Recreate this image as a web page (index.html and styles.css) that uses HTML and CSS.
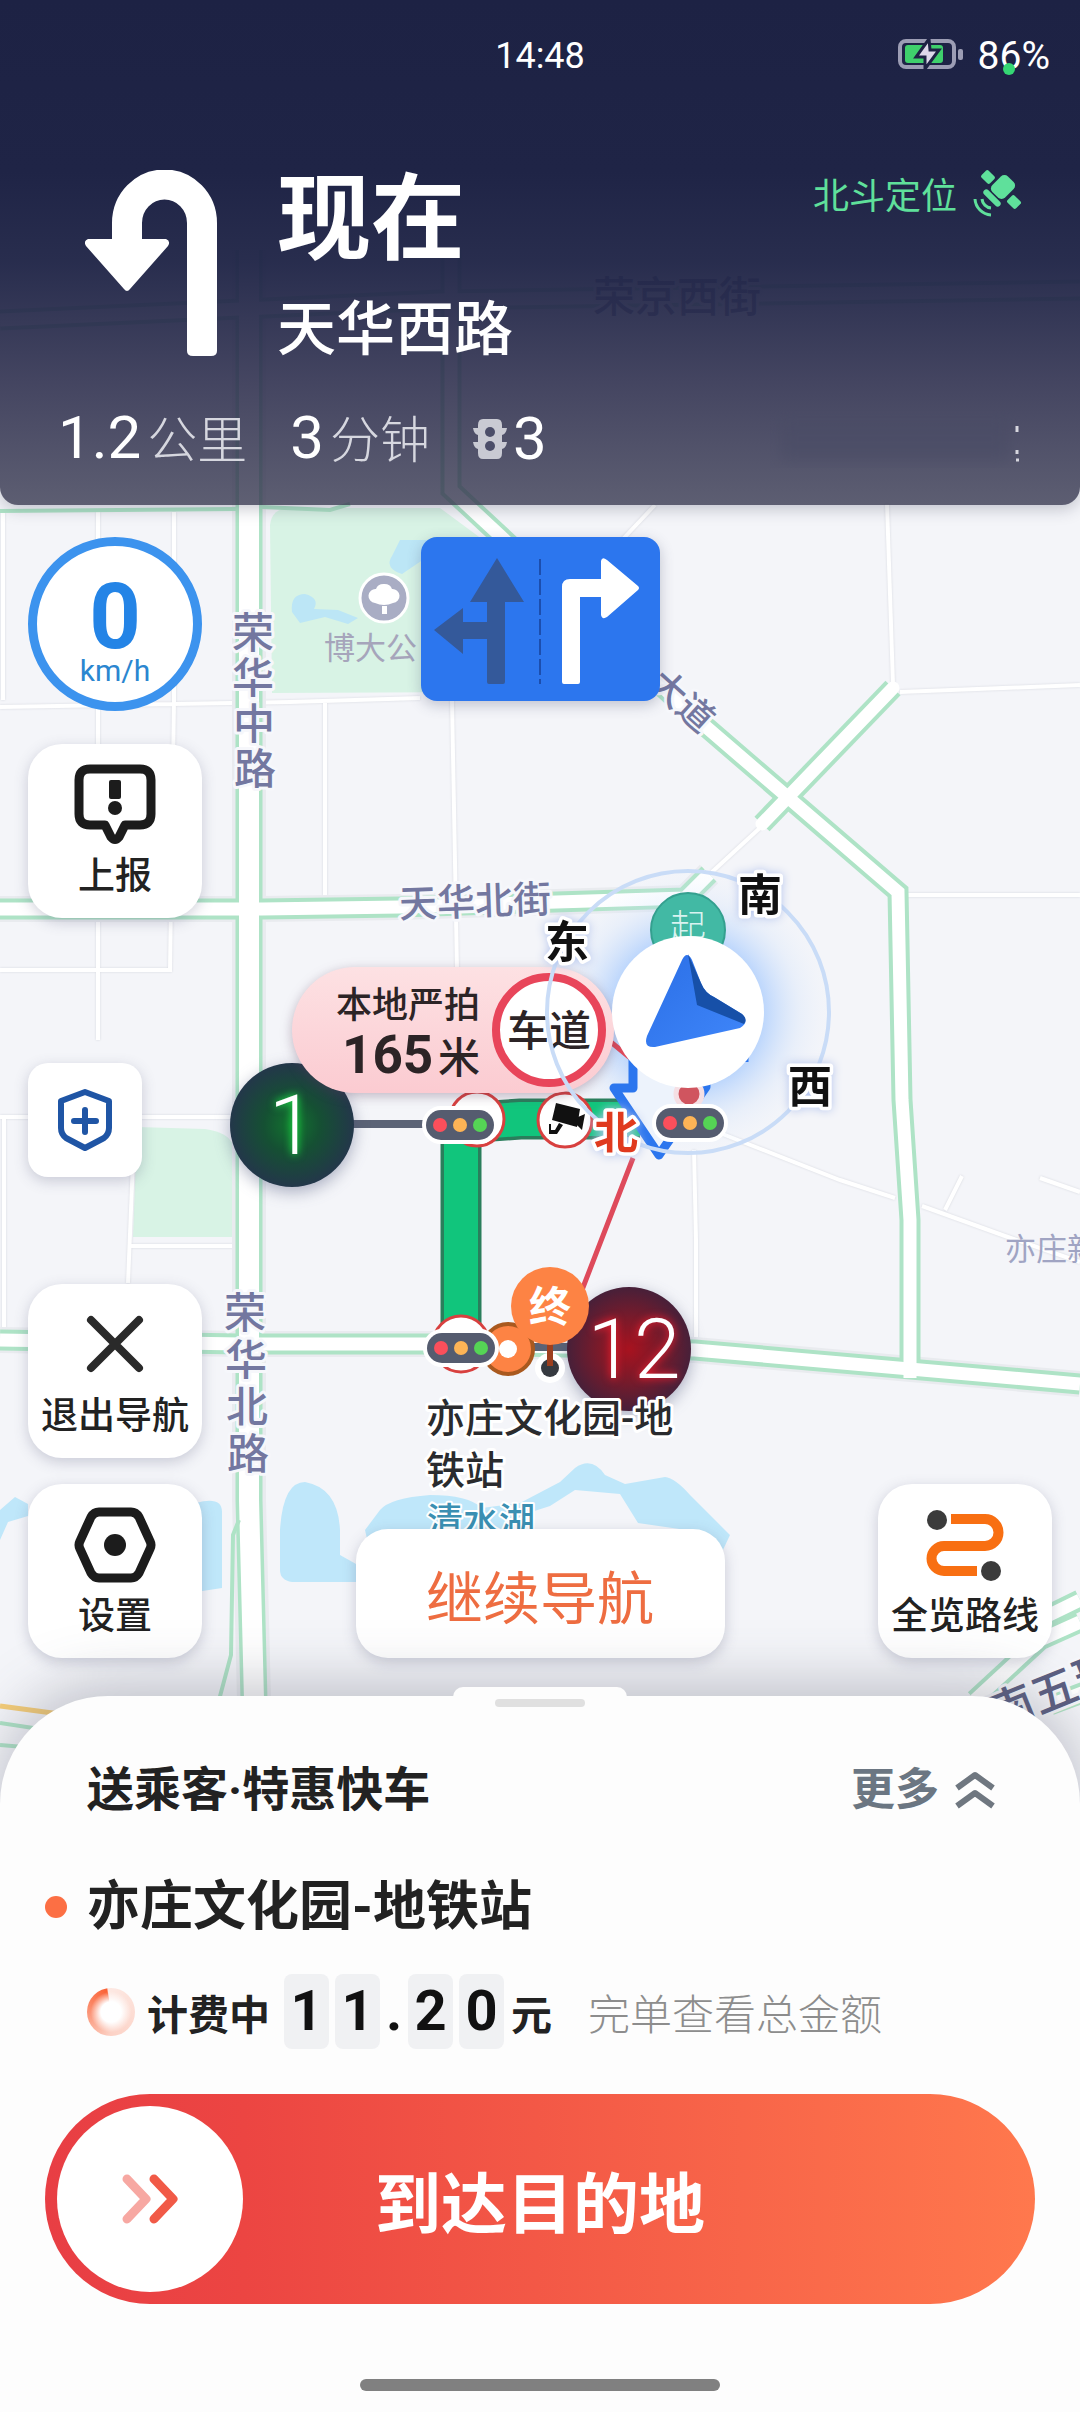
FILE: index.html
```html
<!DOCTYPE html>
<html lang="zh-CN">
<head>
    <meta charset="UTF-8">
    <meta name="viewport" content="width=device-width, initial-scale=1.0">
    <title>导航</title>
    <link rel="stylesheet" href="styles.css">
</head>
<body>
    <!-- map canvas -->
    <svg class="map" role="img" aria-label="地图">
        <defs>
            <radialGradient id="greenLed">
                <stop offset="0" stop-color="#12752f"/>
                <stop offset="0.45" stop-color="#155033"/>
                <stop offset="1" stop-color="#23374a"/>
            </radialGradient>
            <radialGradient id="redLed">
                <stop offset="0" stop-color="#a8121f"/>
                <stop offset="0.5" stop-color="#7a1a2a"/>
                <stop offset="1" stop-color="#472039"/>
            </radialGradient>
            <radialGradient id="halo">
                <stop offset="0.5" stop-color="#8dbcff" stop-opacity="0.9"/>
                <stop offset="0.8" stop-color="#c8defc" stop-opacity="0.35"/>
                <stop offset="1" stop-color="#e6f0fd" stop-opacity="0.1"/>
            </radialGradient>
            <linearGradient id="bubble" x1="0" y1="0" x2="0" y2="1">
                <stop offset="0" stop-color="#fde1e3"/>
                <stop offset="1" stop-color="#fbcbd1"/>
            </linearGradient>
            <linearGradient id="arrowFace" x1="0" y1="0" x2="1" y2="1">
                <stop offset="0" stop-color="#2b6fe6"/>
                <stop offset="1" stop-color="#3f86fa"/>
            </linearGradient>
            <g id="light">
                <rect class="light-body" x="-34" y="-15" width="68" height="30" rx="15"/>
                <circle cx="-20" r="7" fill="#fb4f5b"/>
                <circle r="7" fill="#fdb456"/>
                <circle cx="20" r="7" fill="#55d455"/>
            </g>
        </defs>

        <!-- parks and water -->
        <path class="park" d="M270 525Q272 508 290 508H440L490 545V692L272 693Z"/>
        <path class="park" d="M137 1127L205 1129Q228 1132 233 1145V1237H133Z"/>
        <g class="water-light">
            <path d="M400 540H430V555L402 574Q384 568 392 556Z"/>
            <path d="M292 612Q290 594 305 594Q320 598 314 609L338 610L358 618L348 624L325 617L300 623Z"/>
        </g>
        <g class="water">
            <path d="M0 1510L15 1497L28 1504V1516L8 1522L0 1540Z"/>
            <path d="M196 1503Q222 1496 222 1512V1588L196 1592Z"/>
            <path d="M280 1530Q283 1482 305 1482Q338 1488 340 1530V1555L356 1564V1582H292Q280 1580 280 1570Z"/>
            <path d="M365 1530L380 1510Q390 1498 430 1495Q468 1495 482 1508L520 1503L560 1482L575 1468Q592 1456 605 1475L625 1484L665 1477Q675 1478 690 1495L730 1535L722 1552H370Z"/>
        </g>
        <path class="land" d="M500 1535L522 1515L550 1506L575 1490L620 1494L638 1523L700 1532L724 1552H500Z"/>

        <!-- small streets -->
        <g class="street">
            <path d="M3 512V700M98 512V1040M174 512V700L170 970H0M0 707L290 702L420 698M325 703V896"/>
            <path d="M452 700L457 970M887 504L893 684M900 692L1080 685M905 895H1080M655 505L622 540"/>
            <path d="M0 1117H237M4 1117V1330M133 1160L128 1283M128 1246H237"/>
            <path d="M720 1133L840 1180L895 1198M922 1206L1005 1236L1080 1262M945 1210L962 1176M694 1150L696 1240V1340"/>
            <path d="M712 872L762 826M1040 1178L1080 1192"/>
        </g>

        <!-- main roads: casing, green edge, white middle -->
        <path id="r1" class="road-case" d="M249 250V1500L254 1700"/>
        <g class="road-case">
            <path d="M0 909H262L400 907L685 898L709 874"/>
            <path d="M0 1340L240 1344H430L695 1350L1080 1384"/>
        </g>
        <g class="road-edge wide">
            <path d="M249 250V1500L254 1700"/>
        </g>
        <g class="road-edge">
            <path d="M0 909H262L400 907L685 898L709 874"/>
            <path d="M0 1340L240 1344H430L695 1350L1080 1384"/>
            <path d="M451 250V490L698 720L898 892L902 1100L910 1220V1378"/>
            <path d="M893 688L762 824"/>
            <path d="M0 320L440 300L1080 290"/>
            <path d="M1080 1600L1035 1622M975 1700L1040 1640L1080 1622M1090 1690L1050 1705"/>
        </g>
        <g class="road-fill wide">
            <path d="M249 250V1500L254 1700"/>
        </g>
        <g class="road-fill">
            <path d="M0 909H262L400 907L685 898L709 874"/>
            <path d="M0 1340L240 1344H430L695 1350L1080 1384"/>
            <path d="M451 250V490L698 720L898 892L902 1100L910 1220V1378"/>
            <path d="M893 688L762 824" stroke-linecap="round"/>
            <path d="M0 320L440 300L1080 290"/>
            <path d="M1080 1600L1035 1622M975 1700L1040 1640L1080 1622M1090 1690L1050 1705"/>
        </g>
        <path class="road-line" d="M0 511L237 509M262 507L330 510L350 504M239 1520L233 1535L231 1655L219 1700M0 1723L60 1732M0 1745L60 1750"/>
        <path d="M0 1706L60 1714" stroke="#f5cd78" stroke-width="5"/>

        <!-- road and place names -->
        <g class="road-name">
            <text class="s42" text-anchor="middle"><tspan x="253" y="648">荣</tspan><tspan x="253" y="693">华</tspan><tspan x="254" y="739">中</tspan><tspan x="255" y="784">路</tspan></text>
            <text class="s42" text-anchor="middle"><tspan x="245" y="1328">荣</tspan><tspan x="246" y="1375">华</tspan><tspan x="247" y="1422">北</tspan><tspan x="248" y="1469">路</tspan></text>
            <text class="s38" transform="rotate(-2 475 903)" x="399" y="915">天华北街</text>
            <text class="s36" transform="rotate(42 683 700)" x="647" y="714">大道</text>
            <text class="s42" x="593" y="312">荣京西街</text>
            <text class="s46 dark" transform="rotate(-22 1052 1690)" x="985" y="1708">南五环</text>
        </g>
        <text class="place-name" x="1005" y="1260">亦庄新</text>
        <text class="park-name" x="324" y="659">博大公</text>
        <text class="lake-name" x="427" y="1534">清水湖</text>
        <circle cx="384" cy="598" r="24" fill="#a9adc4" stroke="#fff" stroke-width="3"/>
        <path d="M384 584a8 7 0 0 1 8 5a7 7 0 0 1 1 14q-9 4-18 0a7 7 0 0 1 1-14a8 7 0 0 1 8-5ZM382 606h5v8h-5Z" fill="#fff"/>

        <!-- start point and halo of the car -->
        <circle cx="688" cy="1012" r="140" fill="url(#halo)" class="halo"/>
        <circle cx="688" cy="930" r="37" fill="#42b9a4" stroke="#34a08f" stroke-width="2"/>
        <text class="start s36" x="688" y="941" text-anchor="middle">起</text>

        <!-- route -->
        <path class="route-edge" d="M461 1345V1140Q463 1121 492 1121L520 1119H640"/>
        <path class="route" d="M461 1345V1140Q463 1121 492 1121L520 1119H640"/>
        <path d="M606 1038L640 1066M633 1158L582 1290" stroke="#de4a5b" stroke-width="5"/>
        <path d="M633 1030V1088H614L659 1155L706 1087V1030M744 1050V1062" fill="#edf3fc" stroke="#2c76ee" stroke-width="9" stroke-linejoin="round"/>
        <path d="M345 1124H430M530 1347H580" stroke="#5b6376" stroke-width="8"/>

        <g class="camera">
            <circle cx="477" cy="1119" r="27"/>
            <circle cx="565" cy="1120" r="27"/>
            <circle cx="461" cy="1344" r="28"/>
        </g>
        <path d="M556 1103L580 1109L577 1127L552 1120ZM578 1117L585 1114L582 1130L576 1124ZM559 1123L555 1130H551V1124H549V1134H557L563 1125Z" fill="#111"/>
        <circle cx="508" cy="1349" r="25" fill="#fd8344" stroke="#a9591f" stroke-width="4"/>
        <circle cx="508" cy="1349" r="9" fill="#fff"/>

        <!-- signal countdowns -->
        <g class="signal">
            <circle cx="292" cy="1125" r="62" fill="url(#greenLed)"/>
            <circle cx="629" cy="1349" r="62" fill="url(#redLed)"/>
        </g>
        <text class="led green" x="292" y="1154" text-anchor="middle">1</text>
        <text class="led red" x="634" y="1378" text-anchor="middle">12</text>

        <circle cx="550" cy="1368" r="15" fill="#fff"/>
        <circle cx="550" cy="1368" r="9" fill="#363a40"/>
        <path d="M550 1340V1366" stroke="#9c3f1e" stroke-width="6"/>
        <circle cx="550" cy="1306" r="39" fill="#fd8344"/>
        <text class="pin s42" x="550" y="1322" text-anchor="middle">终</text>

        <text class="stop-name"><tspan x="426" y="1432">亦庄文化园-地</tspan><tspan x="426" y="1484">铁站</tspan></text>

        <!-- camera bubble -->
        <rect class="bubble" x="292" y="967" width="322" height="126" rx="63"/>
        <text class="bubble-text s36" x="336" y="1018">本地严拍</text>
        <text class="bubble-num" x="342" y="1073">165</text>
        <text class="bubble-text s42" x="438" y="1073">米</text>
        <circle cx="549" cy="1030" r="53" fill="#fff" stroke="#e8455a" stroke-width="8"/>
        <text class="bubble-text s42" x="549" y="1046" text-anchor="middle">车道</text>

        <!-- compass and car -->
        <circle cx="688" cy="1012" r="141" fill="none" stroke="#c9dcf7" stroke-width="4"/>
        <circle cx="689" cy="1094" r="13" fill="#d0555f" stroke="#f5dfe4" stroke-width="5"/>
        <circle cx="688" cy="1012" r="76" fill="#fff"/>
        <path d="M682 960Q687 950 692 960L701 983Q705 993 714 997L742 1014Q750 1022 740 1028L655 1047Q643 1048 647 1036Z" fill="url(#arrowFace)"/>
        <path d="M688 954L697 1005L744 1024Q748 1019 742 1014L714 997Q705 993 701 983Z" fill="#1750a8"/>

        <use href="#light" x="460" y="1125"/>
        <use href="#light" x="690" y="1123"/>
        <use href="#light" x="461" y="1348"/>

        <g class="compass" text-anchor="middle">
            <text x="567" y="958">东</text>
            <text x="760" y="911">南</text>
            <text x="810" y="1103">西</text>
            <text class="north" x="616" y="1149">北</text>
        </g>
    </svg>

    <header class="header">
        <div class="status">
            <time>14:48</time>
            <div class="battery">
                <svg width="66" height="32" viewBox="0 0 66 32">
                    <rect x="2" y="3" width="54" height="26" rx="6" fill="none" stroke="#9c9db4" stroke-width="4"/>
                    <rect x="7" y="7" width="38" height="18" rx="3" fill="#3fd06c"/>
                    <rect x="60" y="11" width="5" height="11" rx="2" fill="#9c9db4"/>
                    <path d="M31 1L18 19H27V31L41 12H32Z" fill="#ddd8ea" stroke="#1e2244" stroke-width="3"/>
                </svg>
                <span>86%</span>
                <i class="dot"></i>
            </div>
        </div>
        <div class="turn">
            <svg width="132" height="188" viewBox="0 0 132 188">
                <path d="M42 72V53A37 38 0 0 1 117 53V181" fill="none" stroke="#fff" stroke-width="30"/>
                <path d="M102 175H132V181Q132 186 126 186H108Q102 186 102 181Z" fill="#fff"/>
                <path d="M3 69H81Q86 71 83 76L45 119Q42 123 39 119L1 76Q-2 71 3 69Z" fill="#fff"/>
            </svg>
            <div class="turn-text">
                <h1>现在</h1>
                <p>天华西路</p>
            </div>
            <div class="gps">
                <span>北斗定位</span>
                <svg width="50" height="50" viewBox="0 0 50 50" fill="#5fe09b">
                    <rect x="-6" y="-5" width="12" height="10" rx="2" transform="translate(15 9) rotate(45)"/>
                    <rect x="-11" y="-9" width="22" height="18" rx="5" transform="translate(30 19) rotate(-45)"/>
                    <rect x="-6" y="-5" width="12" height="10" rx="2" transform="translate(41 34) rotate(45)"/>
                    <rect x="-11" y="-3" width="22" height="6" rx="3" transform="translate(19 30) rotate(45)"/>
                    <path d="M9 31A10 10 0 0 0 18 40M2 31A17 17 0 0 0 18 47" fill="none" stroke="#5fe09b" stroke-width="3"/>
                </svg>
            </div>
        </div>
        <div class="stats">
            <span class="stat"><b>1.2</b>公里</span>
            <span class="stat"><b>3</b>分钟</span>
            <span class="stat lights">
                <svg width="34" height="40" viewBox="0 0 34 40">
                    <path d="M10 0H24Q29 0 29 6V9H34Q33 15 29 16V23H34Q33 29 29 30V34Q29 40 24 40H10Q5 40 5 34V30Q1 29 0 23H5V16Q1 15 0 9H5V6Q5 0 10 0Z" fill="#c9cad3"/>
                    <circle cx="17" cy="13" r="5" fill="#4c4e69"/>
                    <circle cx="17" cy="27" r="5" fill="#4c4e69"/>
                </svg>
                <b>3</b>
            </span>
            <svg class="arrival" width="250" height="58" viewBox="0 0 250 58">
                <rect class="smudge" x="10" y="8" width="230" height="42"/>
                <path d="M247 16v6M247 40v4M246 50h3" stroke="#d6d6de" stroke-width="3"/>
            </svg>
        </div>
    </header>

    <main class="controls">
        <div class="col left">
            <div class="speed"><strong>0</strong><span>km/h</span></div>
            <button class="tile report">
                <svg width="82" height="80" viewBox="0 0 82 80" fill="none" stroke="#1c1c1c" stroke-width="9">
                    <path d="M16 5H66Q77 5 77 16V50Q77 61 66 61H51L45 73Q41 78 37 73L31 61H16Q5 61 5 50V16Q5 5 16 5Z" stroke-linejoin="round"/>
                    <rect x="35" y="16" width="12" height="19" rx="2" fill="#1c1c1c" stroke="none"/>
                    <circle cx="41" cy="44" r="7" fill="#1c1c1c" stroke="none"/>
                </svg>
                <span>上报</span>
            </button>
            <button class="shield" aria-label="安全中心">
                <svg width="56" height="64" viewBox="0 0 56 64" fill="none" stroke="#1f55a5" stroke-width="6">
                    <path d="M28 4L52 13V40Q52 46 47 50L28 60L9 50Q4 46 4 40V13Z" stroke-linejoin="round"/>
                    <path d="M28 22V44M17 33H39" stroke-linecap="round"/>
                </svg>
            </button>
            <button class="tile exit">
                <svg width="82" height="80" viewBox="0 0 82 80" fill="none" stroke="#2a2a2a" stroke-width="8" stroke-linecap="round">
                    <path d="M17 16L65 64M65 16L17 64"/>
                </svg>
                <span>退出导航</span>
            </button>
            <button class="tile">
                <svg width="82" height="80" viewBox="0 0 82 80">
                    <path d="M25 8H57Q62 8 65 13L76 37Q78 41 76 45L65 69Q62 74 57 74H25Q20 74 17 69L6 45Q4 41 6 37L17 13Q20 8 25 8Z" fill="none" stroke="#1c1c1c" stroke-width="9"/>
                    <circle cx="41" cy="41" r="11" fill="#1c1c1c"/>
                </svg>
                <span>设置</span>
            </button>
        </div>

        <div class="col center">
            <svg class="lanes" width="239" height="164" viewBox="0 0 239 164">
                <path d="M76 21L103 65H84V145Q84 147 82 147H68Q66 147 66 145V102H42V117L13 93L42 71V85H66V65H49Z" fill="#34599a"/>
                <path d="M119 22V147" stroke="#1c4eae" stroke-width="2" stroke-dasharray="16 4"/>
                <path d="M141 145V50Q141 42 149 42H180V24Q181 19 186 23L217 49Q219 51 217 53L186 80Q181 83 180 78V60H159V145Q159 147 157 147H143Q141 147 141 145Z" fill="#fff"/>
            </svg>
            <button class="resume">继续导航</button>
        </div>

        <div class="col right">
            <button class="tile">
                <svg width="82" height="80" viewBox="0 0 82 80">
                    <path d="M27 15H61A13 13 0 0 1 61 42H20A12 12 0 0 0 20 67H53" fill="none" stroke="#f86f12" stroke-width="10"/>
                    <circle cx="13" cy="16" r="10" fill="#3b3b3b"/>
                    <circle cx="67" cy="67" r="10" fill="#3b3b3b"/>
                </svg>
                <span>全览路线</span>
            </button>
        </div>
    </main>

    <section class="sheet">
        <div class="handle"></div>
        <div class="row trip">
            <h2>送乘客·特惠快车</h2>
            <button class="more">更多
                <svg width="40" height="38" viewBox="0 0 40 38" fill="none" stroke="#6f7780" stroke-width="6">
                    <path d="M2 17L20 4L38 17M2 35L20 22L38 35" stroke-linejoin="round"/>
                </svg>
            </button>
        </div>
        <div class="row dest">亦庄文化园-地铁站</div>
        <div class="row fare">
            <span class="meter"></span>
            <span class="charging">计费中</span>
            <span class="digits"><b>1</b><b>1</b><em>.</em><b>2</b><b>0</b></span>
            <span class="yuan">元</span>
            <span class="note">完单查看总金额</span>
        </div>
        <button class="slide">
            <span class="knob">
                <svg width="56" height="52" viewBox="0 0 56 52" fill="none" stroke-width="9" stroke-linecap="round" stroke-linejoin="round">
                    <path d="M5 6L24 26L5 46" stroke="#f7a8a2"/>
                    <path d="M32 6L51 26L32 46" stroke="#f15a47"/>
                </svg>
            </span>
            到达目的地
        </button>
        <div class="home-bar"></div>
    </section>
</body>
</html>
```
FILE: styles.css
```css
* {
    box-sizing: border-box;
}

body {
    position: relative;
    display: flex;
    flex-direction: column;
    min-height: 100vh;
    margin: 0;
    background-color: #f4f5f9;
    font-family: Roboto, "Noto Sans CJK SC", sans-serif;
    color: #222;
}

h1, h2, p {
    margin: 0;
}

button {
    border: none;
    padding: 0;
    font-family: inherit;
    color: inherit;
    cursor: pointer;
}

/* map */
.map {
    position: absolute;
    top: 0;
    left: 0;
    width: 100%;
    height: 100%;
    overflow: hidden;
}

.park { fill: #d8f3e5; }
.water { fill: #bfe7fa; }
.water-light { fill: #bce6f6; }
.land { fill: #f4f5f9; }

.street path {
    fill: none;
    stroke: #fff;
    stroke-width: 4;
    filter: drop-shadow(0 0 1px #d5d7de);
}

.road-case, .road-edge, .road-fill, .road-line {
    fill: none;
}

.road-case { stroke: #e9ebef; stroke-width: 26; }
#r1 { stroke-width: 34; }
.road-edge { stroke: #aee3c6; stroke-width: 21; }
.road-fill { stroke: #fff; stroke-width: 13; }
.road-edge.wide { stroke-width: 27; }
.road-fill.wide { stroke-width: 20; }
.road-line { stroke: #aee3c6; stroke-width: 4; }

.s36 { font-size: 36px; }
.s38 { font-size: 38px; }
.s42 { font-size: 42px; }
.s46 { font-size: 46px; }

.map text {
    paint-order: stroke;
    stroke-linejoin: round;
}

.road-name {
    fill: #7377a0;
    stroke: #f6f7fb;
    stroke-width: 6px;
    font-weight: 500;
}

.road-name .dark { fill: #5c5f82; }

.place-name { font-size: 31px; fill: #a0a4c3; }
.park-name { font-size: 31px; fill: #a6a5bb; }
.lake-name { font-size: 36px; font-weight: 500; fill: #3a8fb2; stroke: #fff; stroke-width: 4px; }

.route-edge { fill: none; stroke: #2a7e5c; stroke-width: 41; }
.route { fill: none; stroke: #11c57c; stroke-width: 34; }

.camera circle { fill: #fff; stroke: #d8403f; stroke-width: 3; }
.light-body { fill: #555c6f; stroke: #fff; stroke-width: 8; paint-order: stroke; }
.signal { filter: drop-shadow(0 5px 8px rgba(60, 70, 110, 0.4)); }

.led {
    font-size: 84px;
    font-weight: 300;
    fill: #fff;
}

.led.green { filter: drop-shadow(0 0 4px #1eff4c); }
.led.red { filter: drop-shadow(0 0 4px #ff2030); }

.pin { fill: #fff; font-weight: 700; }
.start { fill: #d9f3f0; font-weight: 300; }

.stop-name {
    font-size: 39px;
    font-weight: 500;
    fill: #2a2b2e;
    stroke: #fff;
    stroke-width: 6px;
}

.bubble {
    fill: url(#bubble);
    filter: drop-shadow(0 3px 6px rgba(90, 60, 90, 0.35));
}

.bubble-text { fill: #2c2426; font-weight: 500; }
.bubble-num { font-size: 53px; font-weight: 700; fill: #2c2426; }
.halo { opacity: 0.7; }

.compass text {
    font-size: 44px;
    font-weight: 700;
    fill: #111;
    stroke: #fff;
    stroke-width: 7px;
    filter: drop-shadow(0 0 5px #b4c4ec);
}

.compass .north { fill: #e03a1e; }

/* header */
.header {
    position: relative;
    padding-bottom: 35px;
    border-radius: 0 0 18px 18px;
    background: linear-gradient(#1d2244 0%, #1f2446 34%, rgba(32, 37, 71, 0.96) 52%, rgba(44, 45, 76, 0.88) 76%, rgba(55, 56, 80, 0.8) 100%);
    box-shadow: 0 4px 16px rgba(40, 42, 70, 0.25);
    color: #fff;
}

.status {
    display: grid;
    grid-template-columns: 1fr auto 1fr;
    align-items: center;
    height: 112px;
    padding: 0 30px;
    font-size: 36px;
}

.status time {
    grid-column: 2;
}

.battery {
    position: relative;
    justify-self: end;
    display: flex;
    align-items: center;
    gap: 14px;
    font-size: 39px;
}

.battery svg {
    margin-bottom: 4px;
}

.dot {
    position: absolute;
    right: 35px;
    bottom: 4px;
    width: 12px;
    height: 12px;
    border-radius: 50%;
    background-color: #35d774;
}

.turn {
    display: flex;
    align-items: flex-start;
    padding: 58px 57px 0 85px;
}

.turn-text {
    flex: 1;
    margin-left: 60px;
}

.turn-text h1 {
    font-size: 94px;
    line-height: 100px;
}

.turn-text p {
    margin-top: 24px;
    font-size: 59px;
    font-weight: 500;
    line-height: 72px;
}

.gps {
    display: flex;
    align-items: center;
    gap: 16px;
    height: 46px;
    font-size: 36px;
    color: #5fe09b;
}

.stats {
    display: flex;
    align-items: center;
    gap: 43px;
    height: 62px;
    margin-top: 42px;
    padding: 0 60px 0 58px;
}

.stat {
    display: flex;
    align-items: baseline;
    gap: 6px;
    font-size: 50px;
    font-weight: 300;
    line-height: 62px;
    color: #d6d7df;
}

.stat b {
    font-size: 60px;
    font-weight: 400;
    color: #fff;
}

.arrival {
    margin-left: auto;
}

.smudge {
    fill: #4a4c66;
    filter: blur(8px);
    opacity: 0.6;
}

/* floating controls */
.controls {
    position: relative;
    flex: 1;
    display: grid;
    grid-template-columns: 1fr auto 1fr;
    padding: 32px 28px 38px;
}

.col {
    display: flex;
    flex-direction: column;
}

.left {
    align-items: flex-start;
}

.center {
    align-items: center;
    justify-content: space-between;
}

.right {
    align-items: flex-end;
    justify-content: flex-end;
}

.speed {
    display: flex;
    flex-direction: column;
    align-items: center;
    width: 174px;
    height: 174px;
    padding-top: 30px;
    border: 9px solid #3c93ee;
    border-radius: 50%;
    background-color: #fff;
    color: #2484e6;
}

.speed strong {
    font-size: 90px;
    line-height: 84px;
}

.speed span {
    font-size: 30px;
    line-height: 22px;
    color: #2b86d0;
}

.tile, .shield, .resume {
    background-color: #fff;
    box-shadow: 0 4px 14px rgba(70, 75, 110, 0.25);
}

.tile {
    display: flex;
    flex-direction: column;
    align-items: center;
    gap: 7px;
    width: 174px;
    height: 174px;
    padding-top: 20px;
    border-radius: 34px;
    font-size: 37px;
    font-weight: 500;
    line-height: 52px;
}

.report {
    margin-top: 33px;
}

.shield {
    display: grid;
    place-items: center;
    width: 114px;
    height: 114px;
    margin-top: auto;
    margin-bottom: 107px;
    border-radius: 20px;
}

.exit {
    margin-bottom: 26px;
}

.lanes {
    border-radius: 16px;
    background-color: #2c76ee;
    box-shadow: 0 4px 14px rgba(70, 75, 110, 0.3);
}

.resume {
    width: 369px;
    height: 129px;
    border-radius: 32px;
    font-size: 57px;
    color: #ee6d41;
}

/* bottom sheet */
.sheet {
    position: relative;
    padding: 63px 45px 21px;
    border-radius: 108px 108px 0 0;
    background-color: #fdfdfd;
    box-shadow: 0 -10px 60px rgba(80, 84, 100, 0.35);
}

.handle {
    position: absolute;
    top: -9px;
    left: calc(50% - 87px);
    width: 174px;
    height: 24px;
    border-radius: 10px;
    background-color: #fdfdfd;
}

.handle::after {
    content: "";
    position: absolute;
    top: 12px;
    left: 42px;
    width: 90px;
    height: 8px;
    border-radius: 4px;
    background-color: #e0e0e0;
}

.row {
    display: flex;
    align-items: center;
    padding: 0 40px 0 42px;
}

.trip {
    justify-content: space-between;
}

.trip h2 {
    font-size: 47px;
    line-height: 62px;
}

.more {
    display: flex;
    align-items: center;
    gap: 16px;
    background: none;
    font-size: 44px;
    font-weight: 700;
    line-height: 62px;
    color: #6b7682;
}

.dest {
    position: relative;
    margin-top: 50px;
    font-size: 53px;
    font-weight: 700;
    line-height: 72px;
}

.dest::before {
    content: "";
    position: absolute;
    left: 0;
    width: 22px;
    height: 22px;
    border-radius: 50%;
    background-color: #fc6f44;
}

.fare {
    height: 75px;
    margin-top: 31px;
    font-size: 41px;
    font-weight: 700;
}

.meter {
    width: 48px;
    height: 48px;
    margin-right: 12px;
    border-radius: 50%;
    background: radial-gradient(#fff 30%, rgba(255, 255, 255, 0) 60%), conic-gradient(#fde8e2, #fcd2c6 50%, #fb9476 75%, #fa6236 97%, #fde8e2 98%);
}

.digits {
    display: flex;
    gap: 6px;
    margin: 0 7px 0 14px;
    font-size: 56px;
    line-height: 75px;
    text-align: center;
    color: #111;
}

.digits b {
    width: 45px;
    border-radius: 8px;
    background-color: #f0f1f3;
    font-weight: 700;
}

.digits em {
    width: 16px;
    font-style: normal;
}

.note {
    margin-left: 36px;
    font-size: 42px;
    font-weight: 300;
    color: #8d8d8d;
}

.slide {
    position: relative;
    display: block;
    width: 100%;
    height: 210px;
    margin-top: 45px;
    border-radius: 105px;
    background: linear-gradient(90deg, #e83e44, #ec4542 20%, #ff784d);
    font-size: 66px;
    font-weight: 700;
    color: #fff;
}

.knob {
    position: absolute;
    top: 12px;
    left: 12px;
    display: grid;
    place-items: center;
    width: 186px;
    height: 186px;
    border-radius: 50%;
    background-color: #fff;
}

.home-bar {
    width: 360px;
    height: 12px;
    margin: 75px auto 0;
    border-radius: 6px;
    background-color: #808080;
}
```
